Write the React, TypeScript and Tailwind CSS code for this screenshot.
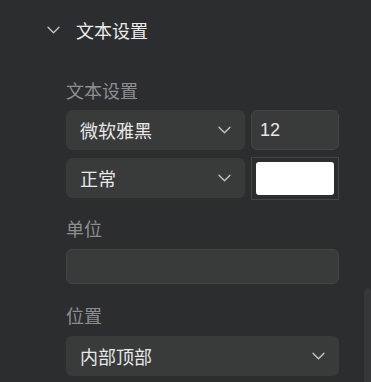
import React from "react";

const Chevron = ({ className }: { className?: string }) => (
  <svg className={className} viewBox="0 0 13 8" fill="none" stroke="currentColor" strokeWidth="1.3" strokeLinecap="round" strokeLinejoin="round">
    <path d="M1 1.2 L6.5 6.8 L12 1.2" />
  </svg>
);

const font = { fontFamily: '"Noto Sans CJK SC", "Liberation Sans", sans-serif' };

function Select({ label }: { label: string }) {
  return (
    <div className="flex h-10 flex-1 items-center justify-between rounded-md bg-[#393a3a] pl-[14px] pr-[14px] text-[18px] text-[#e8e8e8]">
      <span>{label}</span>
      <Chevron className="h-[8px] w-[13px] text-[#c8c8c8]" />
    </div>
  );
}

export default function App() {
  return (
    <div className="relative h-[382px] w-[371px] overflow-hidden bg-[#2c2d2f]" style={font}>
      <div className="pt-[18px]">
        <div className="flex h-6 items-center pl-[47px]">
          <Chevron className="h-[8px] w-[13px] text-[#c8c8c8]" />
          <span className="ml-[16px] text-[18px] leading-6 text-[#ececec]">文本设置</span>
        </div>
        <div className="ml-[66px] w-[273px]">
          <div className="mt-[36px] h-6 text-[18px] leading-6 text-[#8c8f92]">文本设置</div>
          <div className="mt-2 flex gap-[6px]">
            <Select label="微软雅黑" />
            <div className="flex h-10 w-[88px] items-center rounded-md border border-[#434445] bg-[#393a3a] pl-[8px] text-[18px] text-[#e8e8e8]" style={{ fontFamily: '"Liberation Sans", sans-serif' }}>
              12
            </div>
          </div>
          <div className="mt-2 flex h-10 items-center gap-[6px]">
            <Select label="正常" />
            <div className="flex h-[43px] w-[88px] items-center justify-center border border-[#444546] p-[4px]">
              <div className="h-full w-full rounded-[3px] bg-white" />
            </div>
          </div>
          <div className="mt-[18px] h-6 text-[18px] leading-6 text-[#8c8f92]">单位</div>
          <div className="mt-[9px] h-[35px] rounded-md border border-[#434445] bg-[#393a3a]" />
          <div className="mt-[19px] h-6 text-[18px] leading-6 text-[#8c8f92]">位置</div>
          <div className="mt-[9px] flex">
            <Select label="内部顶部" />
          </div>
        </div>
      </div>
      <div className="absolute bottom-0 right-0 top-[288px] w-[7px] rounded-t-[4px] bg-[#353739]" />
    </div>
  );
}
